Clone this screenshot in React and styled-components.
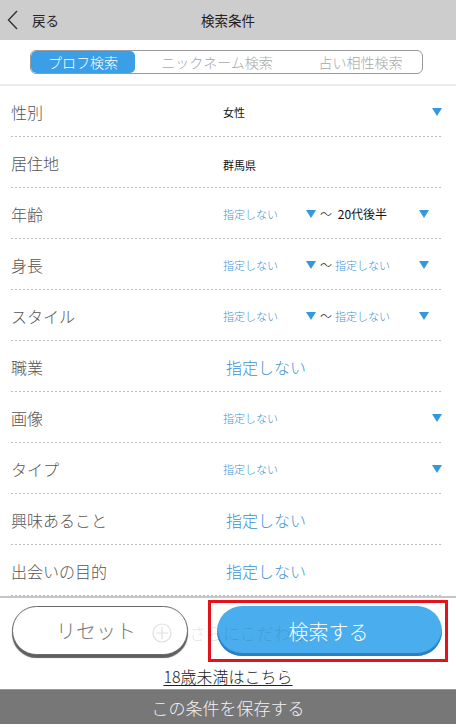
import React from "react";
import styled, { createGlobalStyle } from "styled-components";

const GlobalStyle = createGlobalStyle`
  body {
    margin: 0;
    background: #fff;
    font-family: "Noto Sans CJK JP", "Noto Sans", sans-serif;
    font-weight: 300;
  }
`;

const Page = styled.div`
  width: 456px;
  height: 727px;
  display: flex;
  flex-direction: column;
  background: #fff;
  overflow: hidden;
`;

const Header = styled.div`
  height: 40px;
  background: #cdcdcd;
  display: grid;
  grid-template-columns: 1fr auto 1fr;
  align-items: center;
`;

const Back = styled.div`
  display: flex;
  align-items: center;
  gap: 13px;
  padding-left: 7px;
  font-size: 13.5px;
  font-weight: 400;
  color: #222;
`;

const Title = styled.div`
  font-size: 13.5px;
  font-weight: 400;
  color: #222;
`;

const TabArea = styled.div`
  height: 46px;
  padding-top: 10px;
  box-sizing: border-box;
  border-bottom: 2px solid #ececec;
  display: flex;
  justify-content: center;
`;

const Tabs = styled.div`
  width: 393px;
  height: 24px;
  box-sizing: border-box;
  border: 1px solid #9a9a9a;
  border-radius: 6px;
  display: grid;
  grid-template-columns: 104px 164px 1fr;
  overflow: hidden;
  margin-left: -3px;
`;

const Tab = styled.div`
  display: flex;
  align-items: center;
  justify-content: center;
  font-size: 14px;
  line-height: 1;
  border-radius: 5px;
  background: ${(p) => (p.active ? "#3a9fe6" : "transparent")};
  color: ${(p) => (p.active ? "#fff" : "#a8a8a8")};
`;

const Rows = styled.div`
  display: flex;
  flex-direction: column;
`;

const Row = styled.div`
  height: 51px;
  margin: 0 13px 0 11px;
  display: grid;
  grid-template-columns: 212px 1fr;
  align-items: center;
  background: repeating-linear-gradient(90deg, #bdbdbd 0 2px, transparent 2px 4px)
    bottom / 100% 1px no-repeat;
`;

const Label = styled.div`
  font-size: 16px;
  color: #555;
`;

const Select = styled.div`
  display: flex;
  align-items: center;
  justify-content: space-between;
  width: ${(p) => p.w || "219px"};
`;

const Value = styled.span`
  font-size: ${(p) => (p.big ? "16px" : p.mid ? "12px" : "11px")};
  font-weight: ${(p) => (p.dark ? 400 : 300)};
  color: ${(p) => (p.dark ? "#111" : "#3d92d2")};
  padding-left: ${(p) => (p.big ? "3px" : "0")};
`;

const Arrow = styled.span`
  width: 0;
  height: 0;
  border-left: 5px solid transparent;
  border-right: 5px solid transparent;
  border-top: 8px solid #3399de;
  margin-top: 1px;
`;

const Range = styled.div`
  display: flex;
  align-items: center;
`;

const Tilde = styled.span`
  font-size: 12px;
  color: #111;
  margin: 0 3px 0 4px;
`;

const Footer = styled.div`
  position: relative;
  border-top: 2px solid #c6c6c6;
  padding-top: 2px;
  display: flex;
  flex-direction: column;
  align-items: center;
`;

const Buttons = styled.div`
  width: 100%;
  display: flex;
  align-items: flex-start;
  gap: 20px;
  padding-left: 12px;
  box-sizing: border-box;
`;

const ResetButton = styled.div`
  margin-top: 6px;
  width: 176px;
  height: 49px;
  box-sizing: border-box;
  border: 1px solid #6a6a6a;
  border-radius: 25px;
  background: #fff;
  box-shadow: 0 3px 1px #5e5e5e;
  display: flex;
  align-items: center;
  justify-content: center;
  font-size: 20px;
  color: #7a7a7a;
  padding-right: 8px;
`;

const Highlight = styled.div`
  border: 3px solid #e3131b;
  padding: 3px 3px 3px 6px;
`;

const SearchButton = styled.div`
  width: 225px;
  height: 50px;
  border-radius: 25px;
  background: #4aaeee;
  box-shadow: inset 0 -3px 1px #2b7fbf;
  display: flex;
  align-items: center;
  justify-content: center;
  font-size: 20px;
  color: #fff;
`;

const SearchLabel = styled.span`
  position: relative;
  z-index: 2;
  margin-right: 2px;
`;

const MoreToggle = styled.div`
  position: absolute;
  z-index: 1;
  left: 152px;
  top: 22px;
  display: flex;
  align-items: center;
  gap: 17px;
  font-size: 17px;
  color: rgba(0, 0, 0, 0.13);
`;

const Link = styled.a`
  height: 27px;
  display: flex;
  align-items: center;
  font-size: 16px;
  color: #222;
  text-decoration: underline;
  text-underline-offset: 2px;
`;

const SaveBar = styled.div`
  height: 34px;
  background: #777;
  border-top: 1px solid #999;
  display: flex;
  align-items: center;
  justify-content: center;
  font-size: 17px;
  color: #f2f2f2;
`;

const rows = [
  { label: "性別", type: "single", value: "女性", dark: true },
  { label: "居住地", type: "plain", value: "群馬県" },
  { label: "年齢", type: "range", from: "指定しない", to: "20代後半" },
  { label: "身長", type: "range", from: "指定しない", to: "指定しない" },
  { label: "スタイル", type: "range", from: "指定しない", to: "指定しない" },
  { label: "職業", type: "big" },
  { label: "画像", type: "single", value: "指定しない" },
  { label: "タイプ", type: "single", value: "指定しない" },
  { label: "興味あること", type: "big" },
  { label: "出会いの目的", type: "big" },
];

const renderValue = (row) => {
  if (row.type === "plain") return <Value dark>{row.value}</Value>;
  if (row.type === "big") return <Value big>指定しない</Value>;
  if (row.type === "single")
    return (
      <Select>
        <Value dark={row.dark}>{row.value}</Value>
        <Arrow />
      </Select>
    );
  return (
    <Range>
      <Select w="93px">
        <Value>{row.from}</Value>
        <Arrow />
      </Select>
      <Tilde>～</Tilde>
      <Select w="94px">
        {row.to === "指定しない" ? (
          <Value>{row.to}</Value>
        ) : (
          <Value mid dark>
            &nbsp;{row.to}
          </Value>
        )}
        <Arrow />
      </Select>
    </Range>
  );
};

const App = () => {
  return (
    <Page>
      <GlobalStyle />
      <Header>
        <Back>
          <svg width="12" height="20" viewBox="0 0 12 20">
            <polyline
              points="10,1 1.5,10 10,19"
              fill="none"
              stroke="#333"
              strokeWidth="1.4"
            />
          </svg>
          戻る
        </Back>
        <Title>検索条件</Title>
        <div />
      </Header>
      <TabArea>
        <Tabs>
          <Tab active>プロフ検索</Tab>
          <Tab>ニックネーム検索</Tab>
          <Tab>占い相性検索</Tab>
        </Tabs>
      </TabArea>
      <Rows>
        {rows.map((row) => (
          <Row key={row.label}>
            <Label>{row.label}</Label>
            <div>{renderValue(row)}</div>
          </Row>
        ))}
      </Rows>
      <Footer>
        <Buttons>
          <ResetButton>リセット</ResetButton>
          <Highlight>
            <SearchButton>
              <SearchLabel>検索する</SearchLabel>
            </SearchButton>
          </Highlight>
        </Buttons>
        <MoreToggle>
          <svg width="20" height="20" viewBox="0 0 20 20">
            <circle cx="10" cy="10" r="9" fill="none" stroke="currentColor" strokeWidth="1.2" />
            <path d="M10 4v12M4 10h12" stroke="currentColor" strokeWidth="1.2" />
          </svg>
          <span>さらにこだわる</span>
        </MoreToggle>
        <Link>18歳未満はこちら</Link>
      </Footer>
      <SaveBar>この条件を保存する</SaveBar>
    </Page>
  );
};

export default App;
